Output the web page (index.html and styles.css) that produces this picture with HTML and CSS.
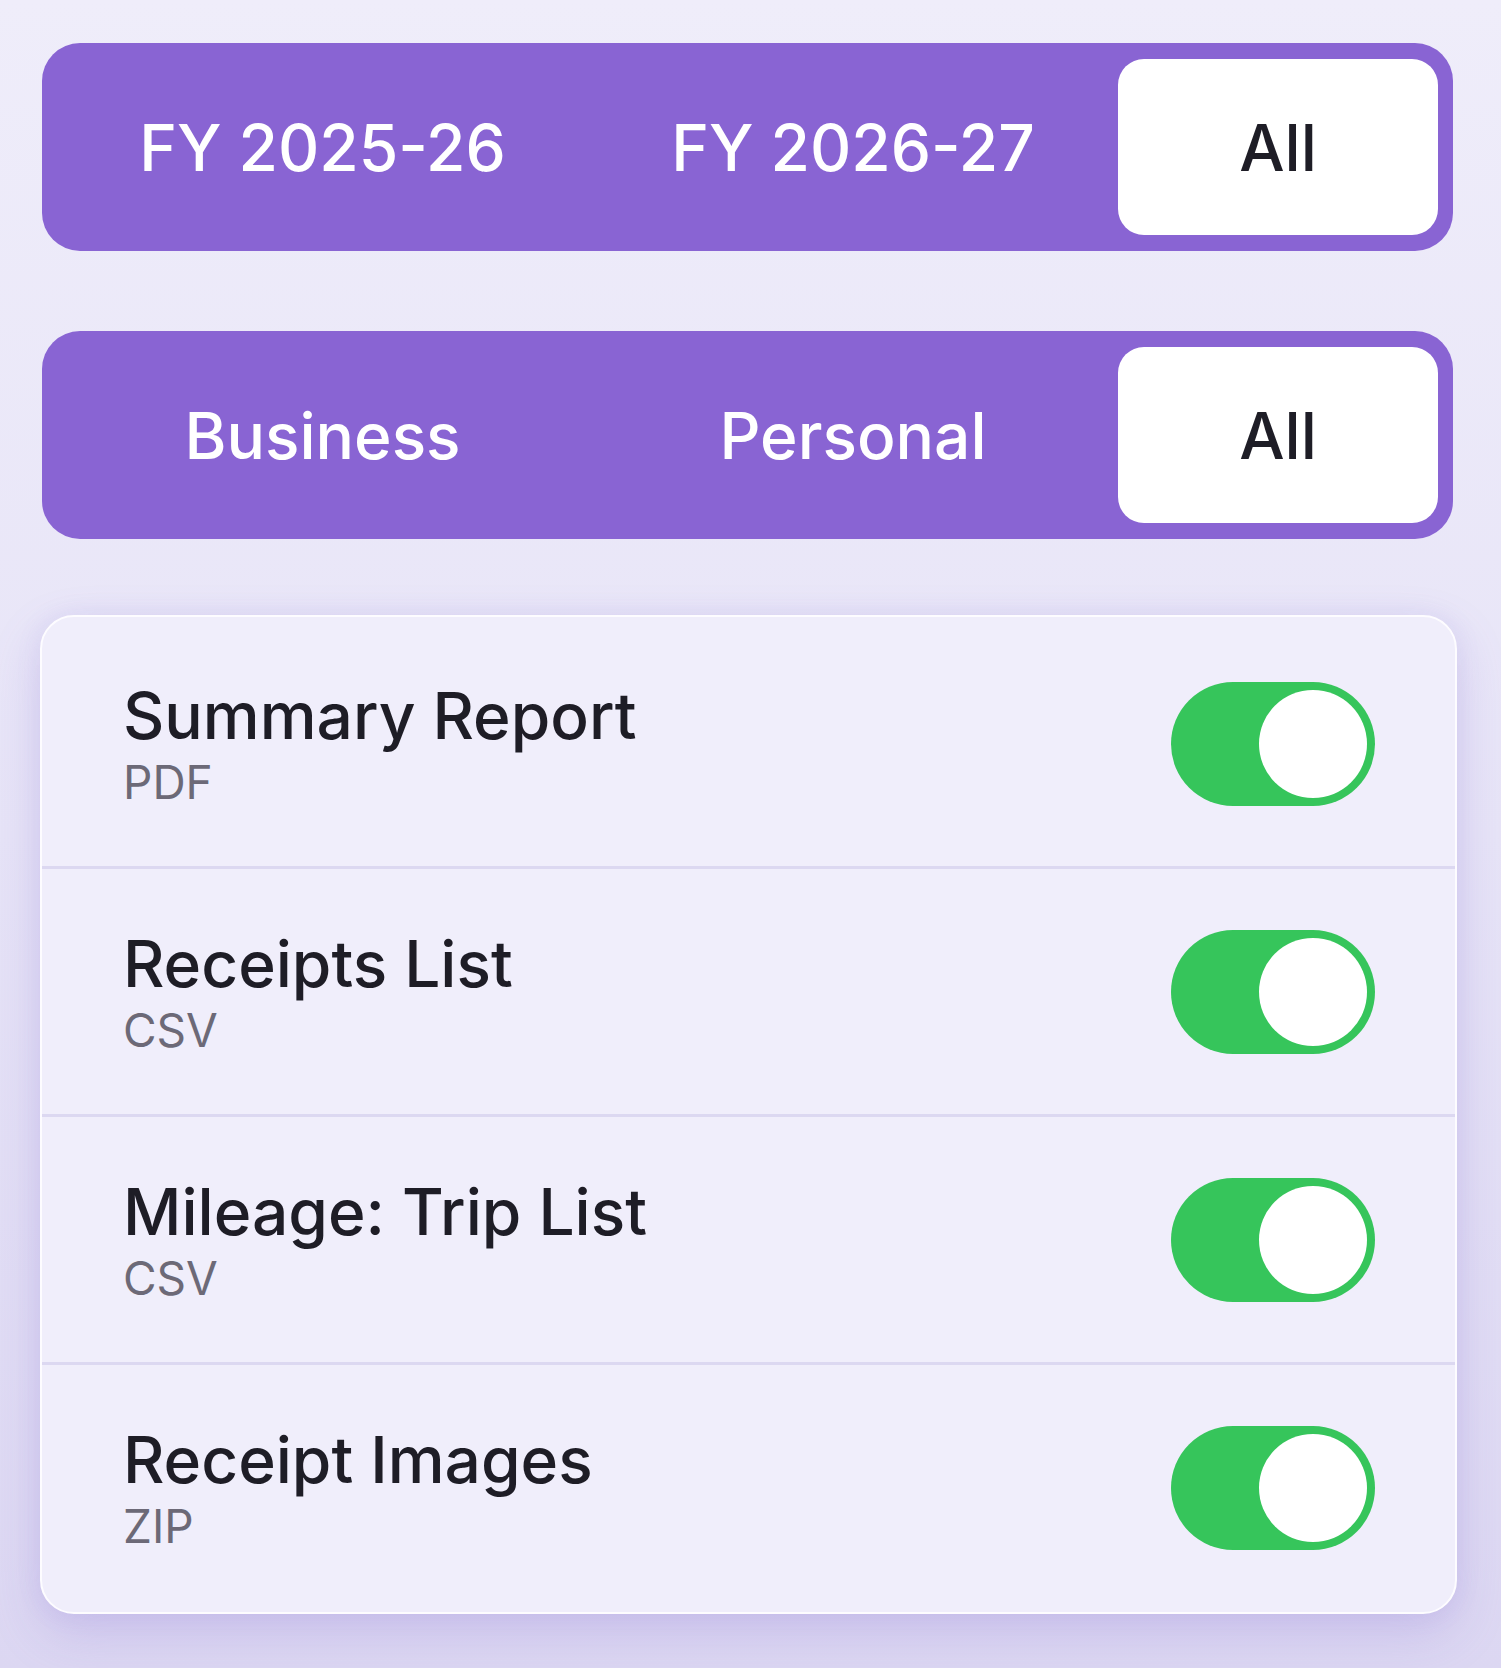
FILE: index.html
```html
<!doctype html>
<html lang="en">
<head>
    <meta charset="utf-8">
    <meta name="viewport" content="width=device-width, initial-scale=1">
    <title>Export</title>
    <link rel="stylesheet" href="styles.css">
</head>
<body>

<div class="segments">
    <div class="segment">FY 2025-26</div>
    <div class="segment">FY 2026-27</div>
    <div class="segment selected">All</div>
</div>

<div class="segments second">
    <div class="segment">Business</div>
    <div class="segment">Personal</div>
    <div class="segment selected">All</div>
</div>

<div class="card">
    <div class="row">
        <div class="label">
            <div class="title">Summary Report</div>
            <div class="sub">PDF</div>
        </div>
        <div class="toggle on"><span class="knob"></span></div>
    </div>
    <div class="row">
        <div class="label">
            <div class="title">Receipts List</div>
            <div class="sub">CSV</div>
        </div>
        <div class="toggle on"><span class="knob"></span></div>
    </div>
    <div class="row">
        <div class="label">
            <div class="title">Mileage: Trip List</div>
            <div class="sub">CSV</div>
        </div>
        <div class="toggle on"><span class="knob"></span></div>
    </div>
    <div class="row">
        <div class="label">
            <div class="title">Receipt Images</div>
            <div class="sub">ZIP</div>
        </div>
        <div class="toggle on"><span class="knob"></span></div>
    </div>
</div>

</body>
</html>
```

FILE: styles.css
```css
html {
    min-height: 100%;
    background: linear-gradient(to bottom, #efedfa 0%, #e7e4f7 50%, #dcd7f2 100%);
}

body {
    margin: 0;
    padding: 43px 48px 0 42px;
    min-height: 1668px;
    box-sizing: border-box;
    font-family: 'Inter', 'Roboto', sans-serif;
    color: #1e1d26;
}

.segments {
    display: grid;
    grid-template-columns: 531px 530px 320px;
    height: 208px;
    box-sizing: border-box;
    padding: 16px 15px;
    border-radius: 38px;
    background-color: #8964d3;
}

.segments.second {
    margin-top: 80px;
}

.segment {
    display: flex;
    align-items: center;
    justify-content: center;
    font-size: 64px;
    font-weight: 500;
    color: #fff;
}

.segment.selected {
    background-color: #fff;
    color: #1e1d26;
    border-radius: 26px;
}

.card {
    margin: 76px -4px 0 -2px;
    padding: 4px 0 2px;
    background-color: #f0eefb;
    border: 2px solid #fdfcff;
    border-radius: 34px;
    box-shadow: 0 20px 50px rgba(130, 110, 210, 0.22), 0 0 24px rgba(150, 130, 220, 0.12);
}

.row {
    display: flex;
    align-items: center;
    justify-content: space-between;
    height: 245px;
    padding: 0 80px 0 81px;
    border-bottom: 3px solid #dcd8f1;
}

.row:last-child {
    border-bottom: none;
}

.label {
    padding-top: 1px;
}

.title {
    font-size: 64px;
    font-weight: 500;
    line-height: 1.2;
    color: #1e1d26;
}

.sub {
    font-size: 46px;
    line-height: 1.22;
    color: #6c6977;
}

.toggle {
    display: flex;
    justify-content: flex-end;
    align-items: center;
    width: 204px;
    height: 124px;
    box-sizing: border-box;
    padding: 8px;
    border-radius: 62px;
    background-color: #36c55b;
}

.knob {
    width: 108px;
    height: 108px;
    border-radius: 50%;
    background-color: #fff;
}
```
